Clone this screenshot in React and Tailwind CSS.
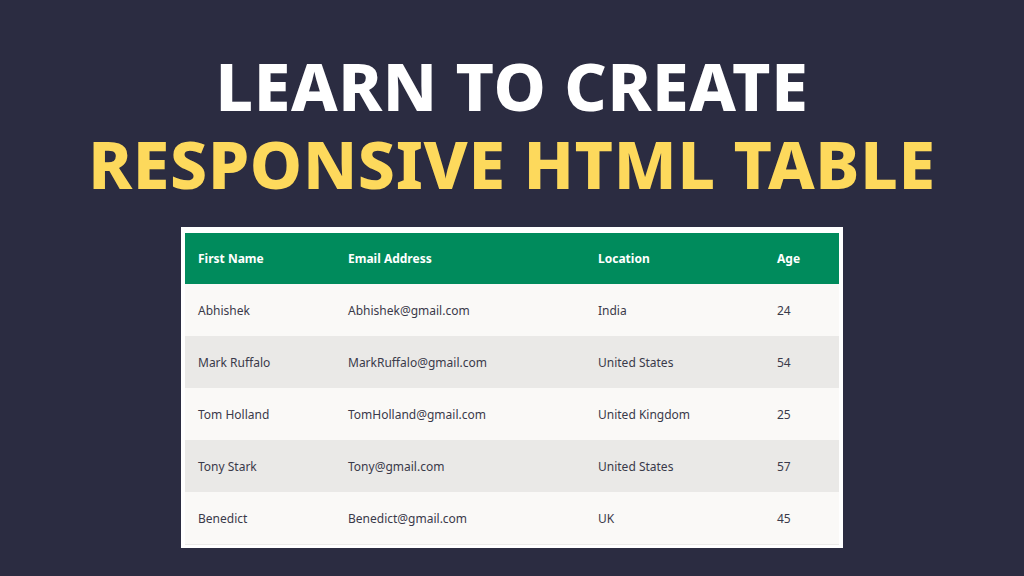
const rows = [
  ['Abhishek', 'Abhishek@gmail.com', 'India', '24'],
  ['Mark Ruffalo', 'MarkRuffalo@gmail.com', 'United States', '54'],
  ['Tom Holland', 'TomHolland@gmail.com', 'United Kingdom', '25'],
  ['Tony Stark', 'Tony@gmail.com', 'United States', '57'],
  ['Benedict', 'Benedict@gmail.com', 'UK', '45'],
]

export default function App() {
  return (
    <div className="w-[1024px] h-[576px] bg-[#2b2c41] flex flex-col items-center overflow-hidden" style={{ fontFamily: '"Noto Sans", sans-serif' }}>
      {/* Title */}
      <div className="mt-[48px] flex flex-col items-center font-extrabold leading-none tracking-[0.04em]">
        <h1 className="text-white text-[66px] leading-[74px]">LEARN TO CREATE</h1>
        <h2 className="text-[#fdd95c] text-[66px] leading-[74px] mt-[4px]">RESPONSIVE HTML TABLE</h2>
      </div>

      {/* Table */}
      <div className="mt-[27px] w-[662px] bg-white p-[4px] pt-[6px] pb-[3px]">
        <table className="w-full border-collapse text-[12px] text-[#3a3a4a]">
          <thead>
            <tr className="bg-[#008b5c] text-white font-bold text-left h-[51px]">
              <th className="pl-[13px] w-[150px]">First Name</th>
              <th className="pl-[13px] w-[250px]">Email Address</th>
              <th className="pl-[13px] w-[179px]">Location</th>
              <th className="pl-[13px]">Age</th>
            </tr>
          </thead>
          <tbody>
            {rows.map((r, i) => (
              <tr key={i} className={`h-[52px] ${i % 2 ? 'bg-[#eae9e7]' : 'bg-[#faf9f7]'} ${i === rows.length - 1 ? 'border-b border-[#ebeae8]' : ''}`}>
                {r.map((c, j) => (
                  <td key={j} className="pl-[13px] pt-[2px]">{c}</td>
                ))}
              </tr>
            ))}
          </tbody>
        </table>
      </div>
    </div>
  )
}
